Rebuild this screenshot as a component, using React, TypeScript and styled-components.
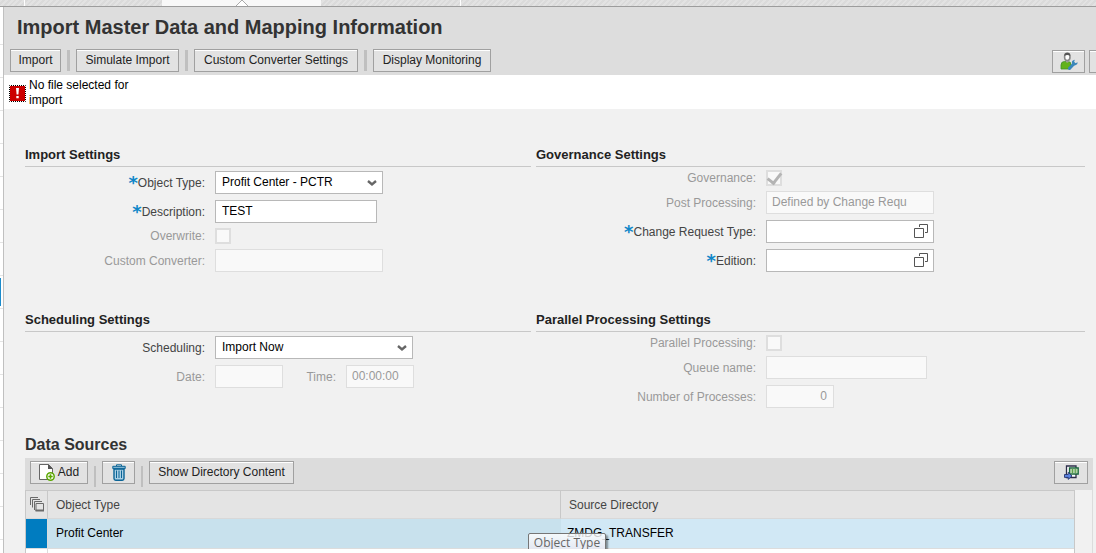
import React from "react";
import styled, { createGlobalStyle, css } from "styled-components";

const Global = createGlobalStyle`
  * { box-sizing: border-box; }
  html, body { margin: 0; background: #f1f1f1; }
  body, button, input, select {
    font-family: "Liberation Sans", Arial, sans-serif;
    font-size: 12px;
  }
  body { color: #000; overflow: hidden; }
`;

const Page = styled.div`
  height: 100vh;
  display: flex;
  flex-direction: column;
  overflow: hidden;
`;

const TabStrip = styled.nav`
  flex: none;
  height: 7px;
  display: flex;
  border-bottom: 1px solid #9c9c9c;
  background: repeating-linear-gradient(135deg, #e2e2e2 0 2px, #dadada 2px 4px);
`;

const TabSlot = styled.div<{ $w: number; $active?: boolean; $divided?: boolean }>`
  width: ${(p) => p.$w}px;
  display: flex;
  justify-content: center;
  align-items: flex-end;
  ${(p) => p.$divided && css`border-right: 1px solid #fff;`}
  ${(p) => p.$active && css`background: #f8f8f8;`}
`;

const Columns = styled.div`
  flex: 1;
  min-height: 0;
  display: flex;
`;

const Rail = styled.ul`
  flex: none;
  width: 4px;
  margin: 0;
  padding: 5px 0 0;
  list-style: none;
  background: #fff;
  border-right: 1px solid #c0c0c0;
  overflow: hidden;
`;

const RailItem = styled.li<{ $active?: boolean }>`
  height: 33px;
  padding: 2px 0;
  border-bottom: 1px solid #e4e4e4;
  &::before {
    content: "";
    display: block;
    width: 1px;
    height: 100%;
    background: ${(p) => (p.$active ? "#1b8bcb" : "transparent")};
  }
`;

const Main = styled.main`
  flex: 1;
  min-width: 0;
  overflow: hidden;
`;

const Header = styled.header`
  height: 68px;
  padding-left: 6px;
  background: #dddddd;
  overflow: hidden;
`;

const Title = styled.h1`
  margin: 0;
  padding: 8px 0 10px 7px;
  font-size: 20px;
  line-height: 24px;
  color: #333;
`;

const Toolbar = styled.div`
  display: flex;
  align-items: center;
  gap: 6px;
`;

const ToolEnd = styled.div`
  display: flex;
  gap: 4px;
  margin: 1px -26px -1px auto;
`;

const BarEnd = styled.div`
  margin-left: auto;
`;

const Button = styled.button<{ $w: number }>`
  flex: none;
  width: ${(p) => p.$w}px;
  height: 23px;
  padding: 0 0 1px;
  display: inline-flex;
  align-items: center;
  justify-content: center;
  gap: 3px;
  white-space: nowrap;
  color: #222;
  background: #e2e2e2;
  border: 1px solid #a0a0a0;
  border-radius: 0;
  box-shadow: inset 0 1px 0 #fff;
`;

const Separator = styled.span`
  flex: none;
  width: 3px;
  height: 21px;
  background: #bfbfbf;
`;

const Message = styled.div`
  height: 34px;
  padding: 3px 5px 1px;
  display: flex;
  align-items: center;
  gap: 3px;
  line-height: 15px;
  background: #fff;
`;

const MessageText = styled.p`
  margin: 0;
  max-width: 112px;
`;

const Forms = styled.div`
  display: grid;
  grid-template-columns: minmax(0, 506fr) minmax(0, 549fr);
  gap: 32px 5px;
  padding: 36px 11px 0 21px;
`;

const SectionTitle = styled.h2`
  height: 22px;
  margin: 0 0 4px;
  font-size: 13px;
  line-height: 20px;
  color: #222;
  border-bottom: 1px solid #c8c8c8;
`;

const Row = styled.div<{ $short?: boolean }>`
  height: ${(p) => (p.$short ? 20 : 29)}px;
  display: flex;
  align-items: flex-start;
  gap: 10px;
`;

const Label = styled.label<{ $w: number; $off?: boolean; $short?: boolean }>`
  flex: none;
  width: ${(p) => p.$w}px;
  line-height: ${(p) => (p.$short ? 14 : 24)}px;
  text-align: right;
  white-space: nowrap;
  color: ${(p) => (p.$off ? "#999" : "#444")};
`;

const Star = styled.span`
  font-family: "DejaVu Sans", sans-serif;
  font-size: 18px;
  font-weight: bold;
  line-height: 12px;
  vertical-align: -2px;
  color: #0f86c8;
`;

const fieldBox = css<{ $w: number }>`
  width: ${(p) => p.$w}px;
  height: 23px;
  margin: 0;
  padding: 0 6px 2px;
  color: #000;
  background-color: #fff;
  border: 1px solid #b8b8b8;
  border-radius: 0;
  outline: none;
  &:disabled {
    color: #999;
    opacity: 1;
    background-color: #f9f9f9;
    border-color: #dedede;
    padding-left: 5px;
  }
`;

const TextField = styled.input<{ $w: number; $right?: boolean }>`
  ${fieldBox}
  text-align: ${(p) => (p.$right ? "right" : "left")};
`;

const SelectBox = styled.div`
  display: grid;
  align-items: center;
  > * { grid-area: 1 / 1; }
  > svg { justify-self: end; margin-right: 6px; pointer-events: none; }
`;

const Select = styled.select<{ $w: number }>`
  ${fieldBox}
  appearance: none;
`;

const HelpButton = styled.button`
  justify-self: end;
  width: 16px;
  height: 16px;
  margin: 0 5px 2px 0;
  padding: 0;
  display: block;
  border: 0;
  background: none;
  z-index: 1;
`;

const Check = styled.input`
  appearance: none;
  width: 16px;
  height: 16px;
  margin: -1px 0 0;
  border: 2px solid #dedede;
  background: #f9f9f9;
  display: grid;
  place-items: center;
  &:checked::before {
    content: "";
    width: 6px;
    height: 11px;
    margin: -3px 0 0 1px;
    border: solid #b4b4b4;
    border-width: 0 3px 3px 0;
    rotate: 38deg;
  }
`;

const Sources = styled.section`
  padding: 20px 3px 0 21px;
`;

const SourcesTitle = styled.h2`
  margin: 0;
  font-size: 16px;
  line-height: 22px;
  padding-bottom: 2px;
  color: #333;
`;

const SourcesBar = styled.div`
  height: 32px;
  padding: 3px 5px 6px;
  display: flex;
  align-items: flex-start;
  gap: 6px;
  background: #dcdcdc;
  ${Separator} { width: 2px; margin-top: 5px; }
`;

const TableFrame = styled.div`
  padding-right: 17px;
  border-right: 1px solid #dcdcdc;
`;

const Table = styled.table`
  width: 100%;
  table-layout: fixed;
  border-collapse: separate;
  border-spacing: 0;
  border: 1px solid #c8c8c8;
  border-bottom: 0;
`;

const Th = styled.th`
  height: 28px;
  padding: 0 8px;
  text-align: left;
  font-weight: normal;
  color: #444;
  background: #e4e4e4;
  border-bottom: 1px solid #d8d8d8;
  &:not(:last-child) { border-right: 1px solid #c8c8c8; }
  &:first-child { padding: 0 3px; }
  > svg { display: block; }
`;

const Td = styled.td<{ $bg: string; $inset?: number }>`
  height: 30px;
  padding: 0 ${(p) => p.$inset ?? 8}px 2px;
  position: relative;
  background: ${(p) => p.$bg};
  border-bottom: 1px solid #dcdcdc;
  &:first-child { border-right: 1px solid #dcdcdc; }
`;

const Tooltip = styled.div`
  position: absolute;
  left: -33px;
  top: 14px;
  width: 78px;
  height: 20px;
  border: 1px solid #767676;
  border-radius: 2px;
  background: linear-gradient(rgba(255, 255, 255, 0.8), rgba(228, 229, 240, 0.85));
  box-shadow: 2px 2px 2px rgba(0, 0, 0, 0.4);
  font-family: "Open Sans", sans-serif;
  font-size: 12px;
  line-height: 18px;
  text-align: center;
  white-space: nowrap;
  color: #666;
`;

const Chevron = () => (
  <svg width="10" height="6" viewBox="0 0 10 6" fill="none" stroke="#666" strokeWidth="2.400">
    <path d="M1 1l4 3.400L9 1" />
  </svg>
);

const Windows = () => (
  <svg width="16" height="16" viewBox="0 0 16 16" fill="none" stroke="#555">
    <path d="M6.500 4V1.500h8v8H12M1.500 5.500h9v9h-9z" />
  </svg>
);

const ErrorIcon = () => (
  <svg width="17" height="17" viewBox="0 0 17 17">
    <rect width="17" height="17" fill="#fff" />
    <rect x="1" y="1" width="15" height="15" fill="#cc0000" />
    <rect x=".5" y=".5" width="16" height="16" fill="none" stroke="#000" strokeDasharray="1 1" strokeDashoffset=".5" />
    <path d="M7 3h3l-.6 6.500H7.600zM7.300 11h2.400v2.200H7.300z" fill="#fff" />
  </svg>
);

const UserWrench = () => (
  <svg width="18" height="18" viewBox="0 0 18 18">
    <path d="M1 17v-4q0-3.500 3.500-3.500H8q3 0 3 3V14l-2 3z" fill="#62b21c" stroke="#3f8f2c" strokeWidth=".8" />
    <path d="M5 8l1.500 2.500h1.600L9.500 8z" fill="#aaa" />
    <ellipse cx="7.300" cy="5" rx="2.700" ry="3.600" fill="#fff" stroke="#888" strokeWidth="1.600" />
    <path d="M4.300 4Q4.300.8 7.300.8T10.300 4Q7.300 1.800 4.300 4z" fill="#555" />
    <path d="M9.500 16.400l4.500-4.600" stroke="#3a87bb" strokeWidth="3" strokeLinecap="round" />
    <path d="M14.800 7.800q-3.600.4-2.800 3.800 1.500 2.600 4 1.400 1.700-.8 1.700-2.800l-2.300 1-1.300-1.200z" fill="#3a87bb" />
  </svg>
);

const AddDoc = () => (
  <svg width="16" height="17" viewBox="0 0 16 17">
    <path d="M.5.5h9l4 4v11H.5z" fill="#fff" stroke="#666" />
    <path d="M9 0l5 5H9z" fill="#555" />
    <circle cx="11.500" cy="12.500" r="3.700" fill="#fff" stroke="#5aa700" strokeWidth="1.500" />
    <path d="M11.500 10.300v4.400M9.300 12.500h4.400" stroke="#5aa700" strokeWidth="1.600" />
  </svg>
);

const Trash = () => (
  <svg width="14" height="17" viewBox="0 0 14 17" fill="none" stroke="#0a6496">
    <path d="M2 5h10v9.500q0 1.700-1.700 1.700H3.700Q2 16.200 2 14.500z" fill="#a9cfe4" strokeWidth="1.400" />
    <path d="M4.500 6.500v7.500M7 6.500v7.500M9.500 6.500v7.500" />
    <path d="M4.500 2V.8h5V2" />
    <path d="M.8 4.600V2.300h12.400v2.300z" fill="#7fb4d2" />
  </svg>
);

const ExportIcon = () => (
  <svg width="15" height="15" viewBox="0 0 15 15">
    <path d="M2.500 1h9.500v11.500H2.500z" fill="#fff" stroke="#2d2d4a" strokeWidth="1.300" />
    <path d="M5.500 3h8.700v6H5.500z" fill="#fff" stroke="#17643a" strokeWidth="1.300" />
    <path d="M6 5h8M6 7h8M8.500 3.500v5M11.300 3.500v5" stroke="#5da04a" />
    <path d="M.5 9.500h3.700V7.300L8 11l-3.800 3.400v-2H.5z" fill="#5d84e0" stroke="#27376f" strokeWidth=".9" />
  </svg>
);

const SelectAll = () => (
  <svg width="16" height="15" viewBox="0 0 16 15" fill="none" stroke="#6a6a6a">
    <path d="M1.500 8V.5H9M3.500 10.500v-8H11M5.500 13V4.500H13" />
    <path d="M7 14V6.500h7.500V14" />
    <path d="M6.500 13.500h8.500" strokeWidth="2" />
  </svg>
);

const TabPointer = () => (
  <svg width="12" height="6" viewBox="0 0 12 6">
    <path d="M0 6l6-6 6 6" fill="#fff" stroke="#aaa" />
  </svg>
);

type FieldRowProps = {
  id: string;
  label: string;
  labelWidth: number;
  required?: boolean;
  off?: boolean;
  short?: boolean;
  children: React.ReactNode;
};

const FieldRow = ({ id, label, labelWidth, required, off, short, children }: FieldRowProps) => (
  <Row $short={short}>
    <Label htmlFor={id} $w={labelWidth} $off={off} $short={short}>
      {required && <Star>*</Star>}
      {label}
    </Label>
    {children}
  </Row>
);

const HelpField = ({ id }: { id: string }) => (
  <SelectBox>
    <TextField id={id} $w={168} />
    <HelpButton type="button" aria-label="Open value help">
      <Windows />
    </HelpButton>
  </SelectBox>
);

const LEFT = 180;
const RIGHT = 220;

export default function App() {
  return (
    <Page>
      <Global />
      <TabStrip>
        <TabSlot $w={25} $divided />
        <TabSlot $w={137} />
        <TabSlot $w={159} $active>
          <TabPointer />
        </TabSlot>
        <TabSlot $w={140} $divided />
      </TabStrip>
      <Columns>
        <Rail>
          {Array.from({ length: 16 }, (_, i) => (
            <RailItem key={i} $active={i === 8} />
          ))}
        </Rail>
        <Main>
          <Header>
            <Title>Import Master Data and Mapping Information</Title>
            <Toolbar>
              <Button $w={51}>Import</Button>
              <Separator />
              <Button $w={103}>Simulate Import</Button>
              <Separator />
              <Button $w={164}>Custom Converter Settings</Button>
              <Separator />
              <Button $w={118}>Display Monitoring</Button>
              <ToolEnd>
                <Button $w={33} aria-label="Personalize">
                  <UserWrench />
                </Button>
                <Button $w={33} aria-label="Help" />
              </ToolEnd>
            </Toolbar>
          </Header>
          <Message role="alert">
            <ErrorIcon />
            <MessageText>No file selected for import</MessageText>
          </Message>

          <Forms>
            <section>
              <SectionTitle>Import Settings</SectionTitle>
              <FieldRow id="objectType" label="Object Type:" labelWidth={LEFT} required>
                <SelectBox>
                  <Select id="objectType" $w={168}>
                    <option>Profit Center - PCTR</option>
                  </Select>
                  <Chevron />
                </SelectBox>
              </FieldRow>
              <FieldRow id="description" label="Description:" labelWidth={LEFT} required>
                <TextField id="description" $w={162} defaultValue="TEST" />
              </FieldRow>
              <FieldRow id="overwrite" label="Overwrite:" labelWidth={LEFT} off short>
                <Check id="overwrite" type="checkbox" disabled />
              </FieldRow>
              <FieldRow id="converter" label="Custom Converter:" labelWidth={LEFT} off>
                <TextField id="converter" $w={168} disabled />
              </FieldRow>
            </section>

            <section>
              <SectionTitle>Governance Settings</SectionTitle>
              <FieldRow id="governance" label="Governance:" labelWidth={RIGHT} off short>
                <Check id="governance" type="checkbox" defaultChecked disabled />
              </FieldRow>
              <FieldRow id="post" label="Post Processing:" labelWidth={RIGHT} off>
                <TextField id="post" $w={168} defaultValue="Defined by Change Requ" disabled />
              </FieldRow>
              <FieldRow id="changeType" label="Change Request Type:" labelWidth={RIGHT} required>
                <HelpField id="changeType" />
              </FieldRow>
              <FieldRow id="edition" label="Edition:" labelWidth={RIGHT} required>
                <HelpField id="edition" />
              </FieldRow>
            </section>

            <section>
              <SectionTitle>Scheduling Settings</SectionTitle>
              <FieldRow id="scheduling" label="Scheduling:" labelWidth={LEFT}>
                <SelectBox>
                  <Select id="scheduling" $w={198}>
                    <option>Import Now</option>
                  </Select>
                  <Chevron />
                </SelectBox>
              </FieldRow>
              <FieldRow id="date" label="Date:" labelWidth={LEFT} off>
                <TextField id="date" $w={68} disabled />
                <Label htmlFor="time" $w={43} $off>
                  Time:
                </Label>
                <TextField id="time" $w={68} defaultValue="00:00:00" disabled />
              </FieldRow>
            </section>

            <section>
              <SectionTitle>Parallel Processing Settings</SectionTitle>
              <FieldRow id="parallel" label="Parallel Processing:" labelWidth={RIGHT} off short>
                <Check id="parallel" type="checkbox" disabled />
              </FieldRow>
              <FieldRow id="queue" label="Queue name:" labelWidth={RIGHT} off>
                <TextField id="queue" $w={161} disabled />
              </FieldRow>
              <FieldRow id="processes" label="Number of Processes:" labelWidth={RIGHT} off>
                <TextField id="processes" $w={68} $right defaultValue="0" disabled />
              </FieldRow>
            </section>
          </Forms>

          <Sources>
            <SourcesTitle>Data Sources</SourcesTitle>
            <SourcesBar>
              <Button $w={58}>
                <AddDoc />
                Add
              </Button>
              <Separator />
              <Button $w={33} aria-label="Delete">
                <Trash />
              </Button>
              <Separator />
              <Button $w={145}>Show Directory Content</Button>
              <BarEnd>
                <Button $w={34} aria-label="Export">
                  <ExportIcon />
                </Button>
              </BarEnd>
            </SourcesBar>
            <TableFrame>
              <Table>
                <colgroup>
                  <col width="22" />
                  <col />
                  <col />
                </colgroup>
                <thead>
                  <tr>
                    <Th aria-label="Select all">
                      <SelectAll />
                    </Th>
                    <Th>Object Type</Th>
                    <Th>Source Directory</Th>
                  </tr>
                </thead>
                <tbody>
                  <tr>
                    <Td $bg="#007cc0" />
                    <Td $bg="#c8e1ed">Profit Center</Td>
                    <Td $bg="#d1e8f5" $inset={6}>
                      ZMDG_TRANSFER
                      <Tooltip role="tooltip">Object Type</Tooltip>
                    </Td>
                  </tr>
                  <tr>
                    <Td $bg="#fff" />
                    <Td $bg="#fff" />
                    <Td $bg="#fff" />
                  </tr>
                </tbody>
              </Table>
            </TableFrame>
          </Sources>
        </Main>
      </Columns>
    </Page>
  );
}
